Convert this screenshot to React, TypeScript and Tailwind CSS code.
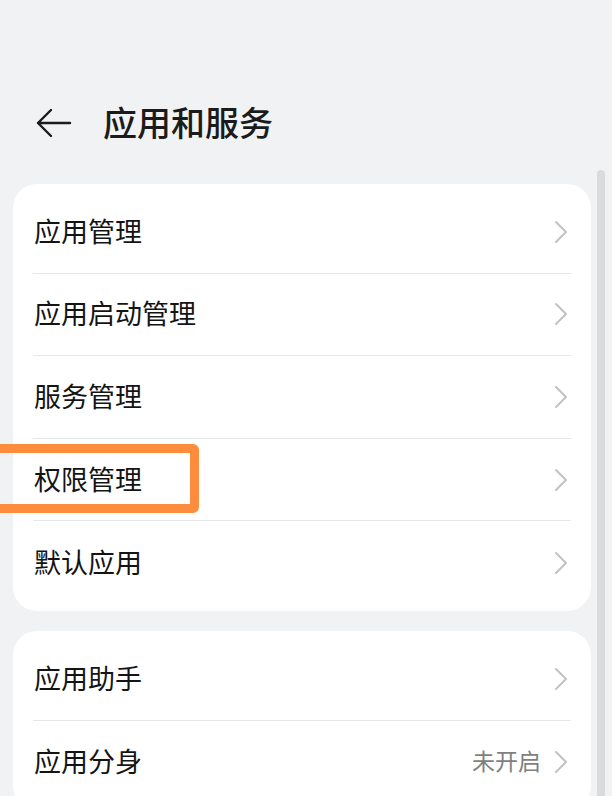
const Chevron = () => (
  <svg width="14" height="24" viewBox="0 0 14 24" fill="none" className="shrink-0">
    <path d="M2 2 L12 12 L2 22" stroke="#c2c2c2" strokeWidth="2" strokeLinecap="round" strokeLinejoin="round" />
  </svg>
);

type Item = { label: string; value?: string };

function Card({ items }: { items: Item[] }) {
  return (
    <div className="bg-white rounded-[24px] py-[7px] px-[20px]">
      {items.map((item, i) => (
        <div
          key={item.label}
          className={`h-[82.6px] flex items-center justify-between ${i < items.length - 1 ? "border-b border-[#e6e7e9]" : ""}`}
        >
          <span className="pl-[1px] pb-[3px] text-[27px] text-[#141414] leading-none">{item.label}</span>
          <div className="flex items-center gap-[13px] pr-[3px]">
            {item.value && <span className="pb-[3px] text-[23px] text-[#7f7f7f] leading-none">{item.value}</span>}
            <Chevron />
          </div>
        </div>
      ))}
    </div>
  );
}

export default function App() {
  return (
    <div
      className="relative w-[612px] h-[796px] overflow-hidden bg-[#f1f2f4]"
      style={{ fontFamily: '"Noto Sans CJK SC", "Noto Sans", sans-serif' }}
    >
      <div className="flex items-center h-[46px] mt-[100px] pl-[36px] gap-[31px]">
        <svg width="36" height="30" viewBox="0 0 36 30" fill="none">
          <path d="M34 15 H2 M15 2 L2 15 L15 28" stroke="#1b1b1b" strokeWidth="2.4" strokeLinecap="round" strokeLinejoin="round" />
        </svg>
        <h1 className="pb-[2px] text-[34px] font-medium text-[#1b1b1b] leading-none">应用和服务</h1>
      </div>

      <div className="pl-[13px] pr-[21px] mt-[38px] flex flex-col gap-[20px]">
        <Card
          items={[
            { label: "应用管理" },
            { label: "应用启动管理" },
            { label: "服务管理" },
            { label: "权限管理" },
            { label: "默认应用" },
          ]}
        />
        <Card items={[{ label: "应用助手" }, { label: "应用分身", value: "未开启" }]} />
      </div>

      {/* highlight box */}
      <div className="absolute left-[-12px] top-[444px] w-[211px] h-[69px] border-[9px] border-[#fd8c3c] rounded-[6px]" />

      {/* scrollbar */}
      <div className="absolute left-[597px] top-[170px] w-[8px] h-[640px] rounded-full bg-[#dadbdd]" />
    </div>
  );
}
